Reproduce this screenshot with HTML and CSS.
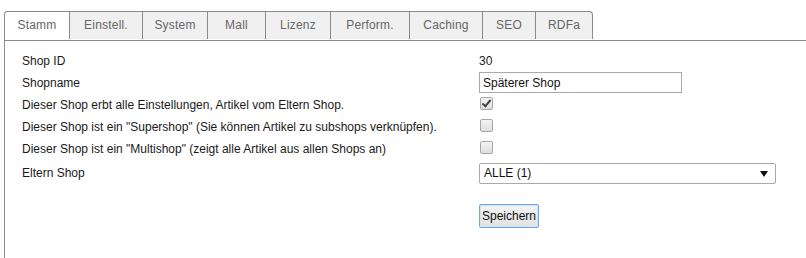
FILE: index.html
```html
<!DOCTYPE html>
<html lang="de">
<head>
  <meta charset="UTF-8">
  <title>Shop Stamm</title>
  <link rel="stylesheet" href="styles.css">
</head>
<body>
  <div class="wrap">
    <div class="tabs">
      <div class="tab active w65">Stamm</div>
      <div class="tab w73">Einstell.</div>
      <div class="tab w65">System</div>
      <div class="tab w58">Mall</div>
      <div class="tab w65">Lizenz</div>
      <div class="tab w79">Perform.</div>
      <div class="tab w73">Caching</div>
      <div class="tab w53">SEO</div>
      <div class="tab last w57">RDFa</div>
    </div>

    <div class="panel">
      <div class="row r-id">
        <div class="label">Shop ID</div>
        <div class="value">30</div>
      </div>
      <div class="row r-name">
        <div class="label">Shopname</div>
        <div class="value"><input type="text" class="text" value="Späterer Shop"></div>
      </div>
      <div class="row r-check">
        <div class="label">Dieser Shop erbt alle Einstellungen, Artikel vom Eltern Shop.</div>
        <div class="value"><input type="checkbox" class="check" checked></div>
      </div>
      <div class="row r-check">
        <div class="label">Dieser Shop ist ein "Supershop" (Sie können Artikel zu subshops verknüpfen).</div>
        <div class="value"><input type="checkbox" class="check"></div>
      </div>
      <div class="row r-check">
        <div class="label">Dieser Shop ist ein "Multishop" (zeigt alle Artikel aus allen Shops an)</div>
        <div class="value"><input type="checkbox" class="check"></div>
      </div>
      <div class="row r-select">
        <div class="label">Eltern Shop</div>
        <div class="value">
          <div class="select-wrap">
            <select class="select">
              <option>ALLE (1)</option>
            </select>
            <svg class="arrow" width="8" height="6" viewBox="0 0 8 6"><path d="M0 0H8L4 6Z" fill="#111"/></svg>
          </div>
        </div>
      </div>
      <div class="row r-save">
        <div class="label"></div>
        <div class="value"><button class="save">Speichern</button></div>
      </div>
    </div>
  </div>
</body>
</html>
```

FILE: styles.css
```css
body {
  margin: 0;
  font-family: "Liberation Sans", Arial, sans-serif;
  font-size: 12px;
  color: #1a1a1a;
  background: #fff;
}
.wrap {
  padding: 11px 0 0 4px;
  height: 247px;
  display: flex;
  flex-direction: column;
}
.tabs {
  display: flex;
  border-bottom: 1px solid #8a8a8a;
  height: 29px;
}
.tab {
  box-sizing: border-box;
  height: 28px;
  line-height: 27px;
  border-top: 1px solid #8a8a8a;
  border-left: 1px solid #8a8a8a;
  background: #f0f0f0;
  color: #666;
  text-align: center;
  letter-spacing: 0.2px;
}
.tab.active {
  background: #fff;
  height: 29px;
  margin-bottom: -1px;
  border-top-left-radius: 4px;
}
.tab.last {
  border-right: 1px solid #8a8a8a;
  border-top-right-radius: 4px;
}
.w53 { width: 53px; }
.w57 { width: 58px; }
.w58 { width: 58px; }
.w65 { width: 65px; }
.w73 { width: 73px; }
.w79 { width: 79px; }
.panel {
  flex: 1;
  border-left: 1px solid #8a8a8a;
  padding: 9px 0 0 17px;
}
.row {
  display: flex;
  align-items: center;
}
.label {
  width: 457px;
  flex: none;
}
.r-id { height: 21px; }
.r-name { height: 23px; }
.r-check { height: 22px; }
.r-select { height: 26px; }
.r-save { height: 42px; align-items: flex-end; }
.text {
  width: 203px;
  height: 21px;
  box-sizing: border-box;
  border: 1px solid #aaa;
  padding: 0 3px;
  font: inherit;
  color: #111;
  margin: 0;
}
.check {
  appearance: none;
  width: 13px;
  height: 13px;
  margin: 0 0 0 1px;
  border: 1px solid #a6a6a6;
  border-radius: 2px;
  background: linear-gradient(#f4f4f4, #dedede);
  position: relative;
}
.check:checked::after {
  content: "";
  position: absolute;
  left: 3px;
  top: 0px;
  width: 3px;
  height: 7px;
  border: solid #444;
  border-width: 0 2px 2px 0;
  transform: rotate(40deg);
}
.select-wrap {
  position: relative;
  width: 297px;
}
.select {
  appearance: none;
  width: 297px;
  height: 21px;
  box-sizing: border-box;
  border: 1px solid #aaa;
  border-radius: 2px;
  background: #fff;
  padding: 0 4px;
  font: inherit;
  color: #111;
  margin: 0;
}
.arrow {
  position: absolute;
  right: 8px;
  top: 8px;
}
.save {
  width: 60px;
  height: 24px;
  margin: 0;
  padding: 0;
  border: 1px solid #6ea6e6;
  border-radius: 2px;
  background: linear-gradient(#f3f3f3, #e2e2e2);
  box-shadow: inset 0 0 0 1px #cfe3fa;
  font: inherit;
  color: #111;
}
```
